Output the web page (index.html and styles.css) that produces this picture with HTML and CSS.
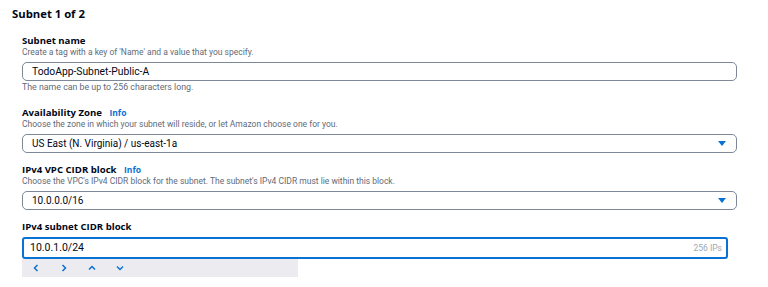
FILE: index.html
```html
<!DOCTYPE html>
<html lang="en">
<head>
    <meta charset="UTF-8">
    <title>Subnet settings</title>
    <link rel="stylesheet" href="styles.css">
</head>
<body>
    <div class="subnet">
        <h2 class="subnet-title">Subnet 1 of 2</h2>

        <!-- Subnet name -->
        <div class="field">
            <div class="label">Subnet name</div>
            <div class="desc">Create a tag with a key of 'Name' and a value that you specify.</div>
            <div class="box">TodoApp-Subnet-Public-A</div>
            <div class="hint">The name can be up to 256 characters long.</div>
        </div>

        <!-- Availability Zone -->
        <div class="field">
            <div class="label">Availability Zone <span class="info">Info</span></div>
            <div class="desc">Choose the zone in which your subnet will reside, or let Amazon choose one for you.</div>
            <div class="box select">US East (N. Virginia) / us-east-1a <span class="caret"></span></div>
        </div>

        <!-- VPC CIDR -->
        <div class="field">
            <div class="label">IPv4 VPC CIDR block <span class="info">Info</span></div>
            <div class="desc">Choose the VPC's IPv4 CIDR block for the subnet. The subnet's IPv4 CIDR must lie within this block.</div>
            <div class="box select">10.0.0.0/16 <span class="caret"></span></div>
        </div>

        <!-- Subnet CIDR -->
        <div class="field">
            <div class="label">IPv4 subnet CIDR block</div>
            <div class="box focus">10.0.1.0/24 <span class="count">256 IPs</span></div>
            <div class="stepper">
                <span class="step"><svg width="8" height="8" viewBox="0 0 8 8"><path d="M5.5 1 L2.5 4 L5.5 7" fill="none" stroke="#0972d3" stroke-width="1.5"/></svg></span>
                <span class="step"><svg width="8" height="8" viewBox="0 0 8 8"><path d="M2.5 1 L5.5 4 L2.5 7" fill="none" stroke="#0972d3" stroke-width="1.5"/></svg></span>
                <span class="step"><svg width="8" height="8" viewBox="0 0 8 8"><path d="M1 5.5 L4 2.5 L7 5.5" fill="none" stroke="#0972d3" stroke-width="1.5"/></svg></span>
                <span class="step"><svg width="8" height="8" viewBox="0 0 8 8"><path d="M1 2.5 L4 5.5 L7 2.5" fill="none" stroke="#0972d3" stroke-width="1.5"/></svg></span>
            </div>
        </div>
    </div>
</body>
</html>
```

FILE: styles.css
```css
body {
    margin: 0;
    background-color: white;
    font-family: "Open Sans", "Noto Sans", sans-serif;
    color: #000716;
}
.subnet {
    padding: 6px 0 0 12px;
}
.subnet-title {
    font-size: 11.3px;
    font-weight: bold;
    margin: 0 0 13px 0;
    line-height: 16px;
}
.field {
    margin-left: 10px;
    width: 715px;
    margin-bottom: 11px;
}
.label {
    font-size: 9.6px;
    font-weight: bold;
    line-height: 12px;
}
.info {
    color: #0972d3;
    font-size: 8.5px;
    margin-left: 5px;
}
/* descriptions and values use a narrower face */
.desc, .hint {
    font-family: Roboto, "Open Sans", sans-serif;
    color: #5f6b7a;
    line-height: 11px;
}
.desc {
    font-size: 8.5px;
    margin-bottom: 4px;
}
.hint {
    font-size: 8.8px;
    margin-top: 1px;
    margin-bottom: 14px;
}
.box {
    position: relative;
    box-sizing: border-box;
    height: 19px;
    border: 1px solid #7d8998;
    border-radius: 5px;
    font-family: Roboto, "Open Sans", sans-serif;
    font-size: 10.3px;
    line-height: 17px;
    padding-left: 9px;
}
.select {
    font-size: 10px;
}
.caret {
    position: absolute;
    right: 10px;
    top: 6px;
    width: 0;
    height: 0;
    border-left: 4px solid transparent;
    border-right: 4px solid transparent;
    border-top: 5px solid #0972d3;
}
.focus {
    width: 706px;
    height: 22px;
    line-height: 18px;
    font-size: 10.5px;
    border: 2px solid #0972d3;
    border-radius: 3px;
    margin-top: 4px;
    padding-left: 6px;
}
.count {
    position: absolute;
    right: 4px;
    font-size: 8.5px;
    color: #9ba7b6;
}
.stepper {
    width: 276px;
    height: 18px;
    background-color: #ebebf0;
    display: flex;
    align-items: center;
    gap: 16px;
    padding-left: 8px;
    box-sizing: border-box;
}
.step {
    display: flex;
    justify-content: center;
    width: 12px;
}
```
